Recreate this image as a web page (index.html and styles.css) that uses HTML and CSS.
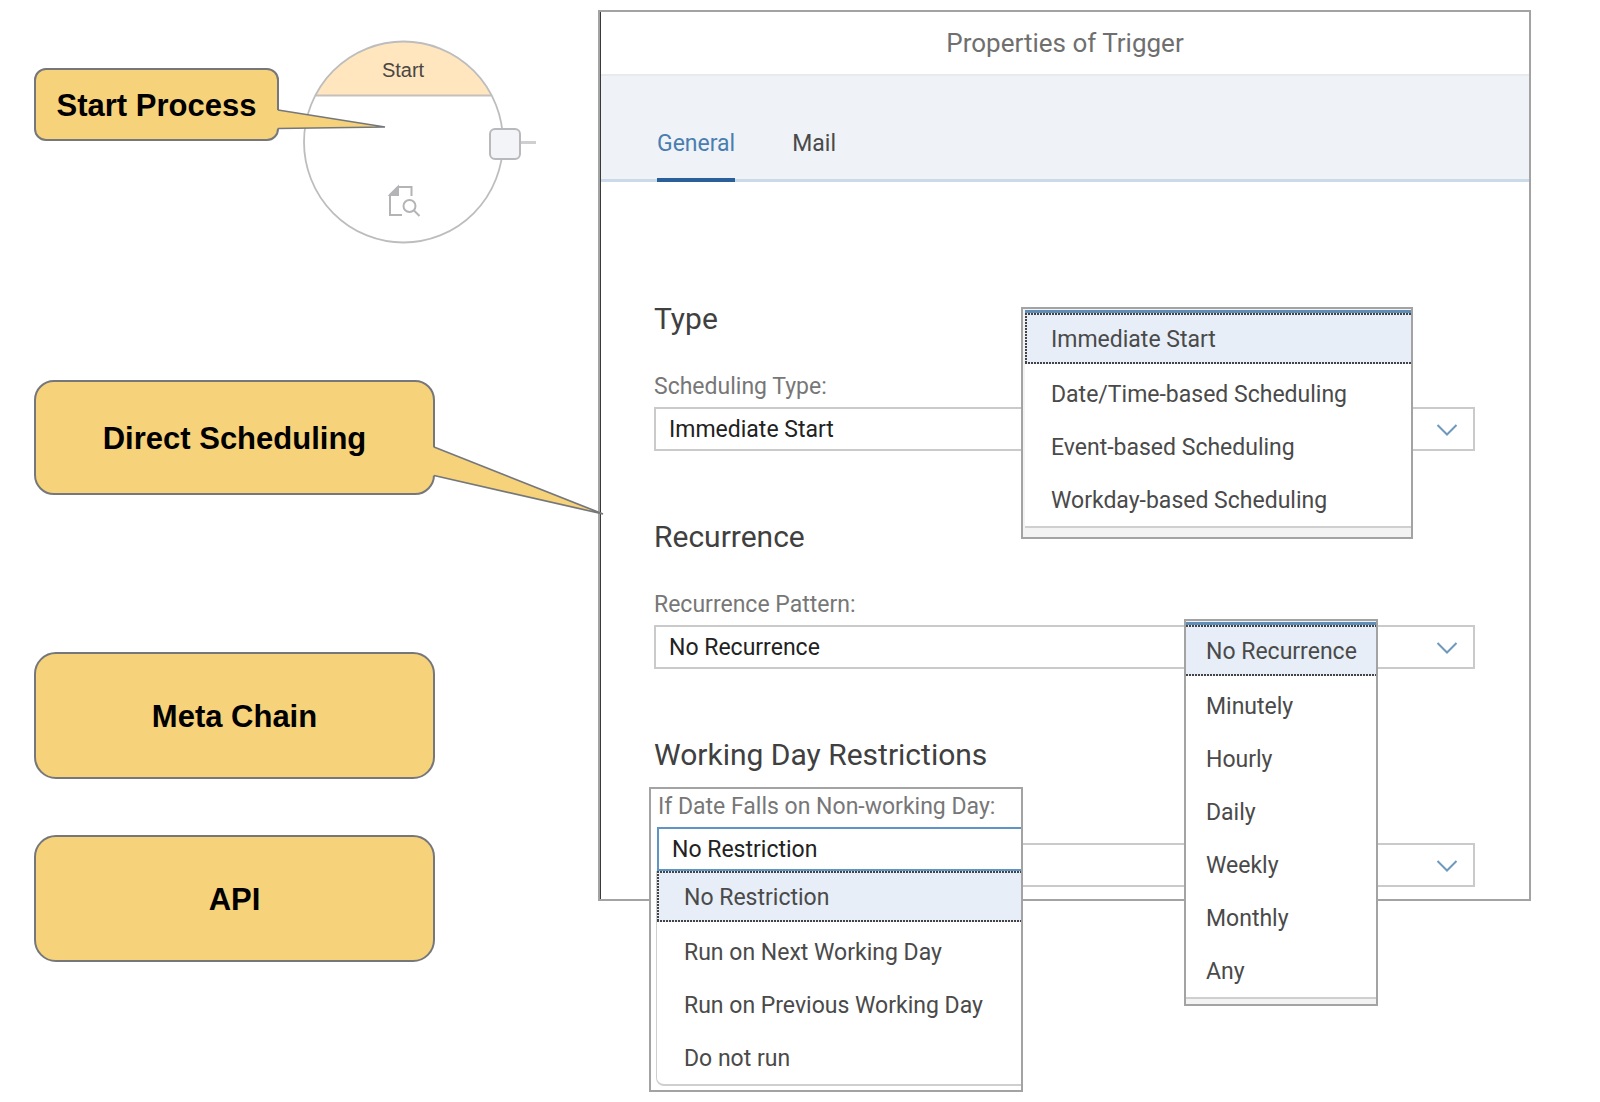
FILE: index.html
```html
<!DOCTYPE html>
<html lang="en">
<head>
<meta charset="utf-8">
<title>Properties of Trigger</title>
<link rel="stylesheet" href="styles.css">
</head>
<body>
<main class="page">
  <div class="notes">
    <div class="start-row">
      <div class="callout callout-small">
        Start Process
        <svg class="tail tail-small" width="110" height="24" viewBox="0 0 110 24" aria-hidden="true"><path d="M0 2L108 19L0 20.500" fill="#f6d27a"/><path d="M1 2L108 19L1 20.500" fill="none" stroke="#75777a" stroke-width="1.500"/></svg>
      </div>
      <svg class="node" width="234" height="204" viewBox="0 0 234 204" role="img" aria-label="Start node">
        <path d="M12.500 55A99.500 100.500 0 0 1 188.500 55Z" fill="#ffe6bf"/>
        <path d="M12.500 55.500H188.500" stroke="#c6bfba" stroke-width="2"/>
        <ellipse cx="100.500" cy="102" rx="99.500" ry="100.500" fill="none" stroke="#bdbdbf" stroke-width="1.800"/>
        <text x="100" y="37" text-anchor="middle" class="node-title">Start</text>
        <path d="M218 102.500H233" stroke="#cfcfd1" stroke-width="3"/>
        <rect x="187" y="89" width="30" height="30" rx="5" fill="#f2f4f8" stroke="#b9b9bb" stroke-width="2"/>
        <g fill="none" stroke="#b4b4b6" stroke-width="2">
          <path d="M99 175H87V155L95 147H108.500V156"/>
          <path d="M87 155H95V147Z" fill="#b4b4b6"/>
          <circle cx="106.500" cy="166" r="6"/>
          <path d="M111 170.500L116.500 176"/>
        </g>
      </svg>
    </div>
    <div class="callout callout-direct">
      Direct Scheduling
      <svg class="tail tail-direct" width="172" height="72" viewBox="0 0 172 72" aria-hidden="true"><path d="M0 2L170 69L0 30.500" fill="#f6d27a"/><path d="M1 2L170 69L1 30.500" fill="none" stroke="#75777a" stroke-width="1.700"/></svg>
    </div>
    <div class="callout callout-large callout-meta">Meta Chain</div>
    <div class="callout callout-large callout-api">API</div>
  </div>

  <section class="panel" aria-labelledby="panel-title">
    <header class="panel-header"><h1 id="panel-title">Properties of Trigger</h1></header>
    <div class="tabs" role="tablist">
      <button class="tab tab-active" role="tab" aria-selected="true" type="button">General</button>
      <button class="tab" role="tab" aria-selected="false" type="button">Mail</button>
    </div>
    <form class="form">
      <section class="group">
        <h2>Type</h2>
        <label for="type">Scheduling Type:</label>
        <div class="field">
          <select id="type"><option>Immediate Start</option></select>
          <svg class="chevron" width="22" height="14" viewBox="0 0 22 14" aria-hidden="true"><path d="M1.500 2L11 11.500L20.500 2"/></svg>
        </div>
        <div class="popup popup-type">
          <ul class="list" role="listbox" aria-label="Scheduling Type">
            <li class="current" role="option" aria-selected="true">Immediate Start</li>
            <li role="option">Date/Time-based Scheduling</li>
            <li role="option">Event-based Scheduling</li>
            <li role="option">Workday-based Scheduling</li>
          </ul>
        </div>
      </section>
      <section class="group">
        <h2>Recurrence</h2>
        <label for="pattern">Recurrence Pattern:</label>
        <div class="field">
          <select id="pattern"><option>No Recurrence</option></select>
          <svg class="chevron" width="22" height="14" viewBox="0 0 22 14" aria-hidden="true"><path d="M1.500 2L11 11.500L20.500 2"/></svg>
        </div>
        <div class="popup popup-pattern">
          <ul class="list" role="listbox" aria-label="Recurrence Pattern">
            <li class="current" role="option" aria-selected="true">No Recurrence</li>
            <li role="option">Minutely</li>
            <li role="option">Hourly</li>
            <li role="option">Daily</li>
            <li role="option">Weekly</li>
            <li role="option">Monthly</li>
            <li role="option">Any</li>
          </ul>
        </div>
      </section>
      <section class="group group-restrictions">
        <h2>Working Day Restrictions</h2>
        <div class="field">
          <select aria-label="Working day restriction"><option></option></select>
          <svg class="chevron" width="22" height="14" viewBox="0 0 22 14" aria-hidden="true"><path d="M1.500 2L11 11.500L20.500 2"/></svg>
        </div>
        <div class="popup popup-restriction">
          <label for="restriction">If Date Falls on Non-working Day:</label>
          <select id="restriction" class="focused"><option>No Restriction</option></select>
          <ul class="list" role="listbox" aria-label="Non-working day options">
            <li class="current" role="option" aria-selected="true">No Restriction</li>
            <li role="option">Run on Next Working Day</li>
            <li role="option">Run on Previous Working Day</li>
            <li role="option">Do not run</li>
          </ul>
        </div>
      </section>
    </form>
  </section>
</main>
</body>
</html>
```
FILE: styles.css
```css
* { box-sizing: border-box; }

body {
  margin: 0;
  background: #fff;
  color: #4a4a4a;
  font: 23px/30px Roboto, "Noto Sans", sans-serif;
}

.page {
  display: grid;
  grid-template-columns: 564px minmax(880px, 1fr);
  align-items: start;
  min-height: 100vh;
  padding: 10px 69px 100px 34px;
}

/* Callouts */
.notes {
  display: flex;
  flex-direction: column;
  position: relative;
  z-index: 1;
  padding-top: 30px;
}

.start-row {
  display: flex;
  align-items: flex-start;
  gap: 24px;
}

.callout {
  position: relative;
  display: flex;
  align-items: center;
  justify-content: center;
  width: 401px;
  padding-top: 2px;
  border: 2px solid #75777a;
  background: #f6d27a;
  color: #000;
  font: bold 31px/36px "Liberation Sans", Arial, sans-serif;
  white-space: nowrap;
}

.callout-small {
  width: 245px;
  height: 73px;
  margin-top: 28px;
  border-radius: 12px;
}

.callout-direct {
  height: 115px;
  margin-top: 136px;
  border-radius: 20px;
}

.callout-large {
  height: 127px;
  border-radius: 22px;
}

.callout-meta { margin-top: 157px; }
.callout-api { margin-top: 56px; }

.tail {
  position: absolute;
  left: 100%;
}

.tail-small { top: 38px; }
.tail-direct { top: 63px; }

.node { flex: none; }

.node-title {
  fill: #4a4642;
  font: 20px "Liberation Sans", Arial, sans-serif;
}

/* Properties panel */
.panel {
  border: 2px solid #a3a3a3;
  box-shadow: inset 1px 0 #3a3a3a;
}

.panel-header {
  padding: 15px 0 15px;
  margin-left: 1px;
  border-bottom: 2px solid #e9eaec;
  text-align: center;
}

h1 {
  margin: 0;
  color: #6f6f6f;
  font-size: 26px;
  font-weight: 400;
  line-height: 32px;
}

.tabs {
  display: flex;
  gap: 57px;
  margin-left: 1px;
  padding: 53px 56px 0;
  background: #eff3f8;
  box-shadow: inset 0 -3px #cbdae8;
}

.tab {
  padding: 0 0 19px;
  border: 0;
  border-bottom: 4px solid transparent;
  background: none;
  color: #4a4a4a;
  font: inherit;
}

.tab-active {
  border-color: #2a6099;
  color: #4a7db0;
}

.form { padding: 118px 54px 12px; }

.group {
  position: relative;
  display: flex;
  flex-direction: column;
}

.group + .group { margin-top: 67px; }

h2 {
  margin: 0 0 34px;
  color: #404040;
  font-size: 30px;
  font-weight: 400;
  line-height: 38px;
}

.group-restrictions h2 { margin-bottom: 69px; }

label {
  margin-bottom: 5px;
  color: #777;
}

.field { position: relative; }

select {
  display: block;
  width: 100%;
  height: 44px;
  margin: 0;
  padding: 2px 13px 0;
  appearance: none;
  border: 2px solid #cacaca;
  border-radius: 0;
  background: #fff;
  color: #222;
  font: inherit;
}

.chevron {
  position: absolute;
  top: 16px;
  right: 17px;
  fill: none;
  stroke: #6f98bd;
  stroke-width: 2;
}

/* Open lists */
.popup {
  position: absolute;
  z-index: 2;
  border: 2px solid #a3a3a3;
  background: #f3f3f3;
}

.popup-type {
  top: 7px;
  right: 62px;
  width: 392px;
  padding: 1px 0 9px 2px;
}

.popup-pattern {
  z-index: 3;
  top: 101px;
  right: 97px;
  width: 194px;
  padding: 1px 0 5px;
}

.popup-restriction {
  top: 51px;
  left: -5px;
  width: 374px;
  padding: 3px 0 4px 5px;
  background: #fff;
}

.popup-restriction label {
  display: block;
  padding-left: 2px;
}

.list {
  margin: 0;
  padding: 0;
  border-top: 3px solid #5f8fb8;
  border-bottom: 2px solid #cfcfcf;
  background: #fff;
  list-style: none;
}

.list li {
  height: 53px;
  padding: 0 26px;
  line-height: 55px;
  white-space: nowrap;
}

.popup-pattern li { padding: 0 20px; }

/* Focus ring: two-pixel dashes, three pixels apart */
.list .current {
  height: 51px;
  margin-bottom: 3px;
  line-height: 54px;
  background:
    repeating-linear-gradient(90deg, #444 0 2px, transparent 2px 3px) 0 0 / 100% 2px no-repeat,
    repeating-linear-gradient(90deg, #444 0 2px, transparent 2px 3px) 0 100% / 100% 2px no-repeat,
    repeating-linear-gradient(#444 0 2px, transparent 2px 3px) 0 0 / 2px 100% no-repeat,
    #e7eef7;
}

/* The narrow list shows no left edge on its focus ring */
.popup-pattern .current {
  background:
    repeating-linear-gradient(90deg, #444 0 2px, transparent 2px 3px) 0 0 / 100% 2px no-repeat,
    repeating-linear-gradient(90deg, #444 0 2px, transparent 2px 3px) 0 100% / 100% 2px no-repeat,
    #e7eef7;
}

.popup-restriction .list {
  border-top: 0;
  border-left: 1px solid #cfcfcf;
  border-bottom-left-radius: 8px;
}

.popup-restriction li { padding-left: 27px; }

select.focused {
  margin-left: 1px;
  width: calc(100% - 1px);
  border-color: #5f95c4;
  border-right: 0;
}
```
